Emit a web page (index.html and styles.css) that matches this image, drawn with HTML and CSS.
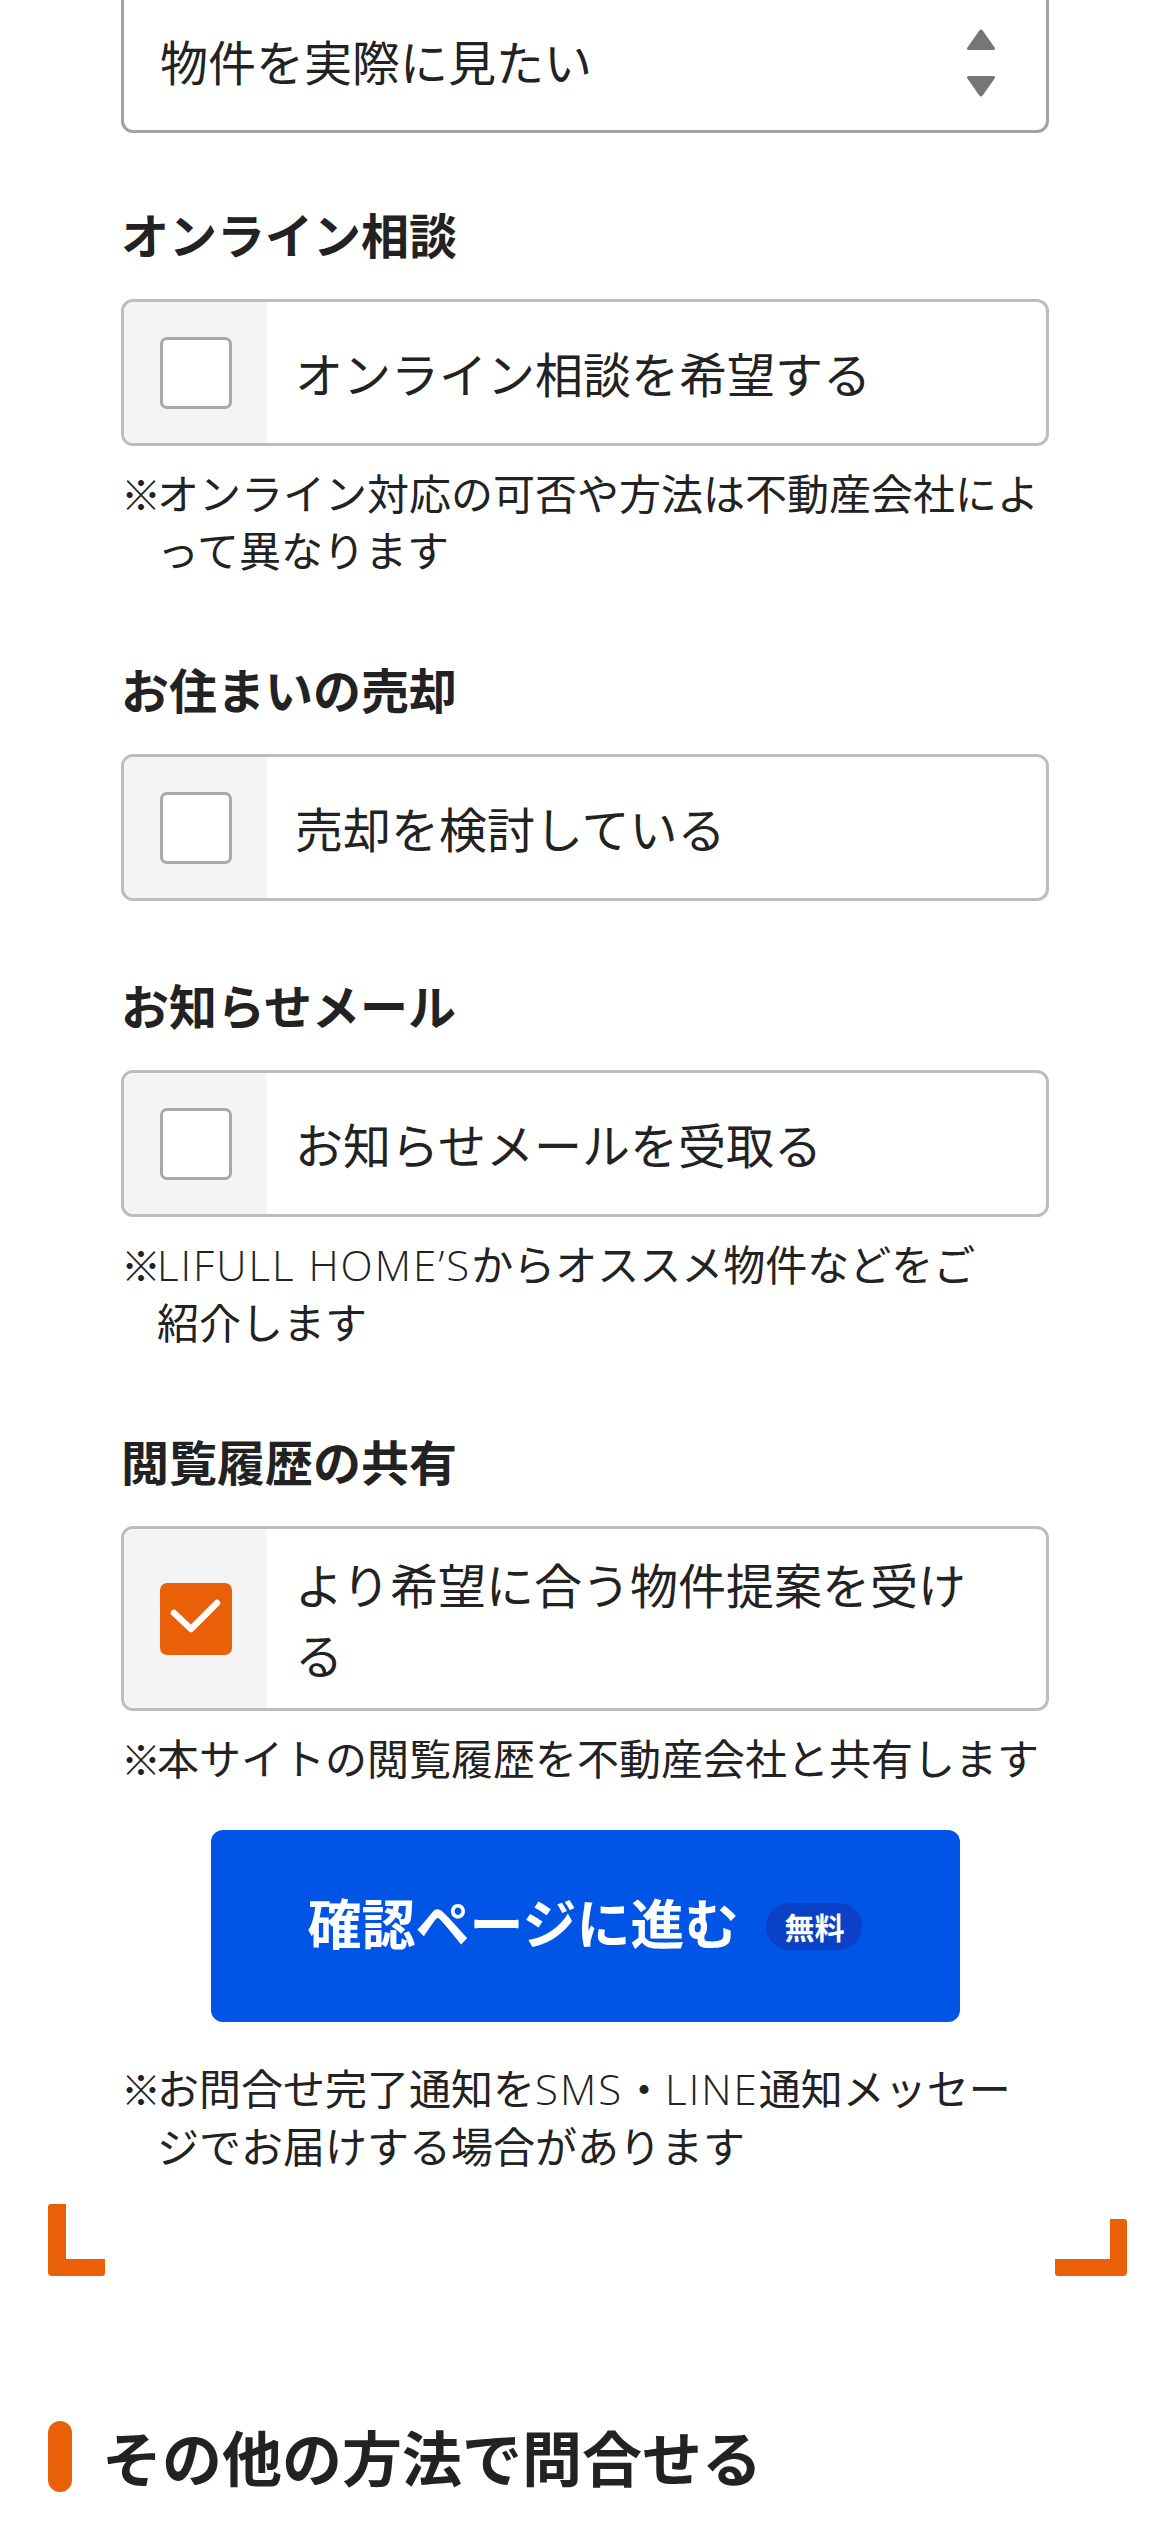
FILE: index.html
```html
<!DOCTYPE html>
<html lang="ja">
<head>
<meta charset="utf-8">
<title>お問合せ</title>
<link rel="stylesheet" href="styles.css">
</head>
<body>
<main class="page">
  <section class="form">
    <div class="select">
      <span class="select-text">物件を実際に見たい</span>
      <svg class="select-arrows" width="30" height="68" viewBox="0 0 30 68" aria-hidden="true">
        <path d="M13.3 1.6 Q15 -0.6 16.7 1.6 L28.6 18.4 Q30 21 27 21 L3 21 Q0 21 1.4 18.4 Z"/>
        <path d="M13.3 66.4 Q15 68.6 16.7 66.4 L28.6 49.6 Q30 47 27 47 L3 47 Q0 47 1.4 49.6 Z"/>
      </svg>
    </div>

    <div class="field">
      <h2 class="field-title">オンライン相談</h2>
      <label class="check">
        <span class="check-col"><span class="check-box"></span></span>
        <span class="check-label">オンライン相談を希望する</span>
      </label>
      <p class="note"><span class="kome">※</span>オンライン対応の可否や方法は不動産会社によって異なります</p>
    </div>

    <div class="field">
      <h2 class="field-title">お住まいの売却</h2>
      <label class="check">
        <span class="check-col"><span class="check-box"></span></span>
        <span class="check-label">売却を検討している</span>
      </label>
    </div>

    <div class="field">
      <h2 class="field-title">お知らせメール</h2>
      <label class="check">
        <span class="check-col"><span class="check-box"></span></span>
        <span class="check-label">お知らせメールを受取る</span>
      </label>
      <p class="note"><span class="kome">※</span><span class="latin">LIFULL HOME’S</span>からオススメ物件などをご<br>紹介します</p>
    </div>

    <div class="field">
      <h2 class="field-title">閲覧履歴の共有</h2>
      <label class="check">
        <span class="check-col">
          <span class="check-box is-checked">
            <svg width="72" height="72" viewBox="0 0 72 72" aria-hidden="true">
              <polyline points="14,30 31,46 57,20" fill="none" stroke="#fff" stroke-width="6.5" stroke-linecap="round" stroke-linejoin="round"/>
            </svg>
          </span>
        </span>
        <span class="check-label">より希望に合う物件提案を受ける</span>
      </label>
      <p class="note"><span class="kome">※</span>本サイトの閲覧履歴を不動産会社と共有します</p>
    </div>

    <button class="submit" type="button">
      <span class="submit-text">確認ページに進む</span>
      <span class="submit-badge">無料</span>
    </button>

    <p class="note note-after"><span class="kome">※</span>お問合せ完了通知を<span class="latin">SMS</span>・<span class="latin">LINE</span>通知メッセー<br>ジでお届けする場合があります</p>
  </section>

  <div class="brackets">
    <span class="bracket bracket-left"></span>
    <span class="bracket bracket-right"></span>
  </div>

  <h2 class="other-title"><span class="other-bar"></span>その他の方法で問合せる</h2>
</main>
</body>
</html>
```

FILE: styles.css
```css
* {
  box-sizing: border-box;
}

html,
body {
  margin: 0;
  padding: 0;
  background: #ffffff;
}

body {
  font-family: "Noto Sans CJK JP", "Noto Sans", sans-serif;
  color: #222222;
  width: 1170px;
  overflow: hidden;
}

.page {
  display: flex;
  flex-direction: column;
  padding-bottom: 40px;
}

.form {
  display: flex;
  flex-direction: column;
  padding: 0 121px;
}

/* select box (scrolled partly out of view) */
.select {
  margin-top: -14px;
  height: 147px;
  border: 3px solid #a2a2a2;
  border-radius: 12px;
  display: flex;
  align-items: center;
  justify-content: space-between;
  padding: 0 50px 0 36px;
}

.select-text {
  font-size: 48px;
  line-height: 72px;
}

.select-arrows {
  fill: #767676;
  margin-top: 7px;
}

/* field groups */
.field {
  display: flex;
  flex-direction: column;
  margin-top: 67px;
}

.select + .field {
  margin-top: 64px;
}

.field-title {
  margin: 0 0 30px;
  font-size: 48px;
  line-height: 72px;
  font-weight: 700;
}

.check {
  display: flex;
  min-height: 147px;
  border: 3px solid #bdbdbd;
  border-radius: 12px;
  overflow: hidden;
}

.check-col {
  width: 143px;
  flex: none;
  background: #f4f4f4;
  display: flex;
  align-items: center;
  justify-content: center;
}

.check-box {
  width: 72px;
  height: 72px;
  border: 3px solid #a8a8a8;
  border-radius: 7px;
  background: #ffffff;
  display: flex;
}

.check-box.is-checked {
  border: none;
  background: #ea6008;
}

.check-label {
  flex: 1;
  align-self: center;
  padding: 20px 45px 20px 28px;
  font-size: 48px;
  line-height: 1.45;
}

.note {
  margin: 18px 0 8px;
  font-size: 42px;
  line-height: 56px;
  padding-left: 36px;
  text-indent: -36px;
}

.kome {
  display: inline-block;
  width: 36px;
  text-indent: 0;
  font-size: 40px;
}

.latin {
  font-family: "Open Sans", "Noto Sans", sans-serif;
  font-weight: 300;
  letter-spacing: 2px;
}

/* submit button */
.submit {
  margin: 36px auto 0;
  width: 749px;
  height: 192px;
  border: none;
  border-radius: 12px;
  background: #0055e6;
  color: #ffffff;
  display: flex;
  align-items: center;
  justify-content: center;
  gap: 28px;
  font-family: "Noto Sans CJK JP", "Noto Sans", sans-serif;
  padding: 0;
}

.submit-text {
  font-size: 54px;
  font-weight: 700;
  line-height: 72px;
  margin-top: -8px;
}

.submit-badge {
  height: 47px;
  padding: 0 18px;
  border-radius: 24px;
  background: #0b41c6;
  font-size: 30px;
  font-weight: 700;
  line-height: 47px;
}

.note-after {
  margin-top: 37px;
}

/* corner brackets */
.brackets {
  margin-top: 23px;
  display: flex;
  justify-content: space-between;
  align-items: flex-end;
  padding: 0 43px 0 48px;
}

.bracket {
  display: block;
  border-color: #ea6008;
  border-style: solid;
}

.bracket-left {
  width: 57px;
  height: 72px;
  border-width: 0 0 17px 18px;
  border-radius: 3px 0 3px 4px;
}

.bracket-right {
  width: 72px;
  height: 57px;
  border-width: 0 17px 17px 0;
  border-radius: 0 3px 4px 3px;
}

/* next section title */
.other-title {
  margin: 144px 0 0;
  padding-left: 48px;
  display: flex;
  align-items: center;
  gap: 30px;
  font-size: 60px;
  line-height: 72px;
  font-weight: 700;
}

.other-bar {
  width: 24px;
  height: 71px;
  border-radius: 12px;
  background: #ea6008;
  flex: none;
}
```
